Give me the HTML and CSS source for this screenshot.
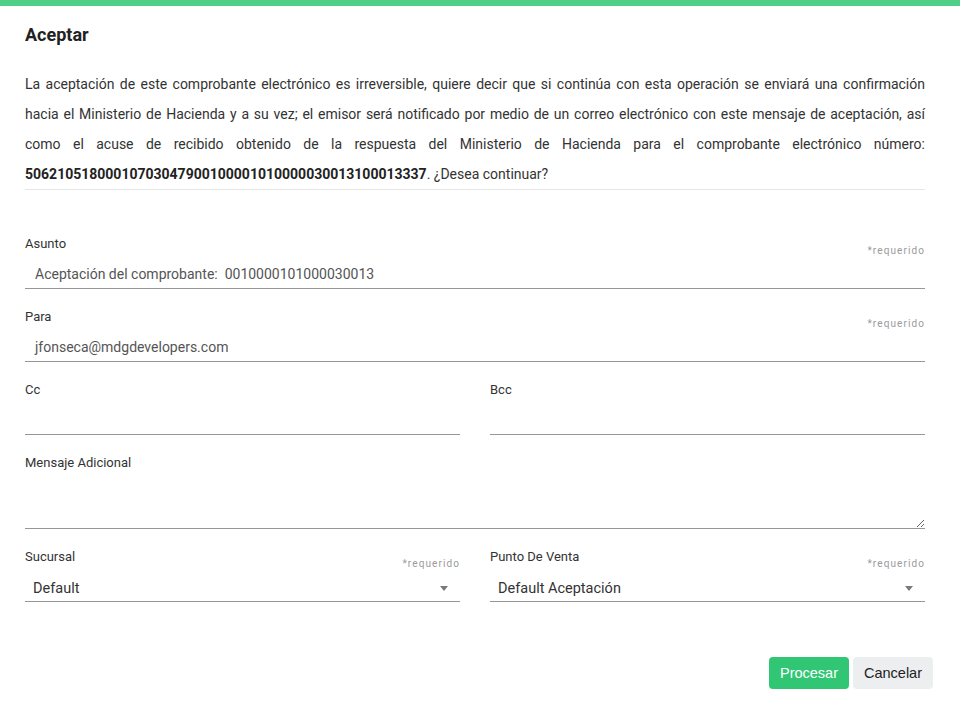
FILE: index.html
```html
<!DOCTYPE html>
<html lang="es">
<head>
<meta charset="utf-8">
<title>Aceptar</title>
<link rel="stylesheet" href="styles.css">
</head>
<body>
<div class="modal">
  <div class="topbar"></div>
  <div class="content">
    <h1 class="title">Aceptar</h1>
    <p class="intro">La aceptación de este comprobante electrónico es irreversible, quiere decir que si continúa con esta operación se enviará una confirmación hacia el Ministerio de Hacienda y a su vez; el emisor será notificado por medio de un correo electrónico con este mensaje de aceptación, así como el acuse de recibido obtenido de la respuesta del Ministerio de Hacienda para el comprobante electrónico número: <strong>50621051800010703047900100001010000030013100013337</strong>. ¿Desea continuar?</p>

    <div class="form">
      <div class="field">
        <div class="label-row"><span class="label">Asunto</span><span class="req">*requerido</span></div>
        <div class="input">Aceptación del comprobante:&nbsp; 0010000101000030013</div>
      </div>
      <div class="field">
        <div class="label-row"><span class="label">Para</span><span class="req">*requerido</span></div>
        <div class="input">jfonseca@mdgdevelopers.com</div>
      </div>
      <div class="row">
        <div class="field">
          <div class="label-row"><span class="label">Cc</span></div>
          <div class="input"></div>
        </div>
        <div class="field">
          <div class="label-row"><span class="label">Bcc</span></div>
          <div class="input"></div>
        </div>
      </div>
      <div class="field">
        <div class="label-row"><span class="label">Mensaje Adicional</span></div>
        <textarea class="textarea"></textarea>
      </div>
      <div class="row">
        <div class="field">
          <div class="label-row"><span class="label">Sucursal</span><span class="req">*requerido</span></div>
          <div class="select"><span class="value">Default</span><span class="caret"></span></div>
        </div>
        <div class="field">
          <div class="label-row"><span class="label">Punto De Venta</span><span class="req">*requerido</span></div>
          <div class="select"><span class="value">Default Aceptación</span><span class="caret"></span></div>
        </div>
      </div>
    </div>
  </div>
  <div class="footer">
    <button class="btn btn-primary">Procesar</button>
    <button class="btn btn-secondary">Cancelar</button>
  </div>
</div>
</body>
</html>
```

FILE: styles.css
```css
* { box-sizing: border-box; }
html, body { margin: 0; padding: 0; background: #fff; }
body { font-family: Roboto, "Liberation Sans", Arial, sans-serif; color: #333; }

.modal { width: 960px; height: 714px; background: #fff; display: flex; flex-direction: column; }
.topbar { height: 6px; background: #4fd086; flex: none; }

.content { padding: 17px 35px 0 25px; }
.title { margin: 0; font-size: 18px; line-height: 24px; font-weight: 700; color: #222; }

.intro {
  margin: 22px 0 0;
  font-size: 14px;
  line-height: 30px;
  text-align: justify;
  color: #333;
  border-bottom: 1px solid #e6e6e6;
}
.intro strong { color: #222; }

.form { margin-top: 45px; display: flex; flex-direction: column; gap: 19px; }
.row { display: grid; grid-template-columns: 1fr 1fr; gap: 30px; }

.label-row { display: flex; justify-content: space-between; align-items: flex-end; height: 20px; }
.label { font-size: 13px; line-height: 18px; color: #333; align-self: flex-start; }
.req { font-size: 10px; line-height: 12px; letter-spacing: 1.1px; color: #9a9a9a; margin-bottom: -2px; }

.input {
  height: 34px;
  padding: 5px 0 0 10px;
  display: flex;
  align-items: center;
  border-bottom: 1px solid #969696;
  font-size: 14px;
  color: #555;
}

.textarea {
  display: block;
  width: 100%;
  height: 55px;
  margin: 0;
  border: none;
  border-bottom: 1px solid #969696;
  outline: none;
  resize: vertical;
  font-family: inherit;
  font-size: 14px;
  padding: 6px 10px;
  background: transparent;
}

.select {
  height: 34px;
  padding: 8px 12px 0 8px;
  display: flex;
  align-items: center;
  justify-content: space-between;
  border-bottom: 1px solid #969696;
}
.select .value { font-size: 14.5px; color: #333; }
.caret {
  width: 0; height: 0;
  border-left: 4px solid transparent;
  border-right: 4px solid transparent;
  border-top: 5px solid #7a7a7a;
}

.footer { margin-top: auto; display: flex; justify-content: flex-end; gap: 4px; padding: 0 27px 25px 0; }
.btn {
  width: 80px;
  height: 32px;
  border: none;
  border-radius: 4px;
  font-family: "Liberation Sans", Arial, sans-serif;
  font-size: 14.5px;
  cursor: pointer;
}
.btn-primary { background: #30c674; color: #fff; }
.btn-secondary { background: #eceef0; color: #222; }
```
